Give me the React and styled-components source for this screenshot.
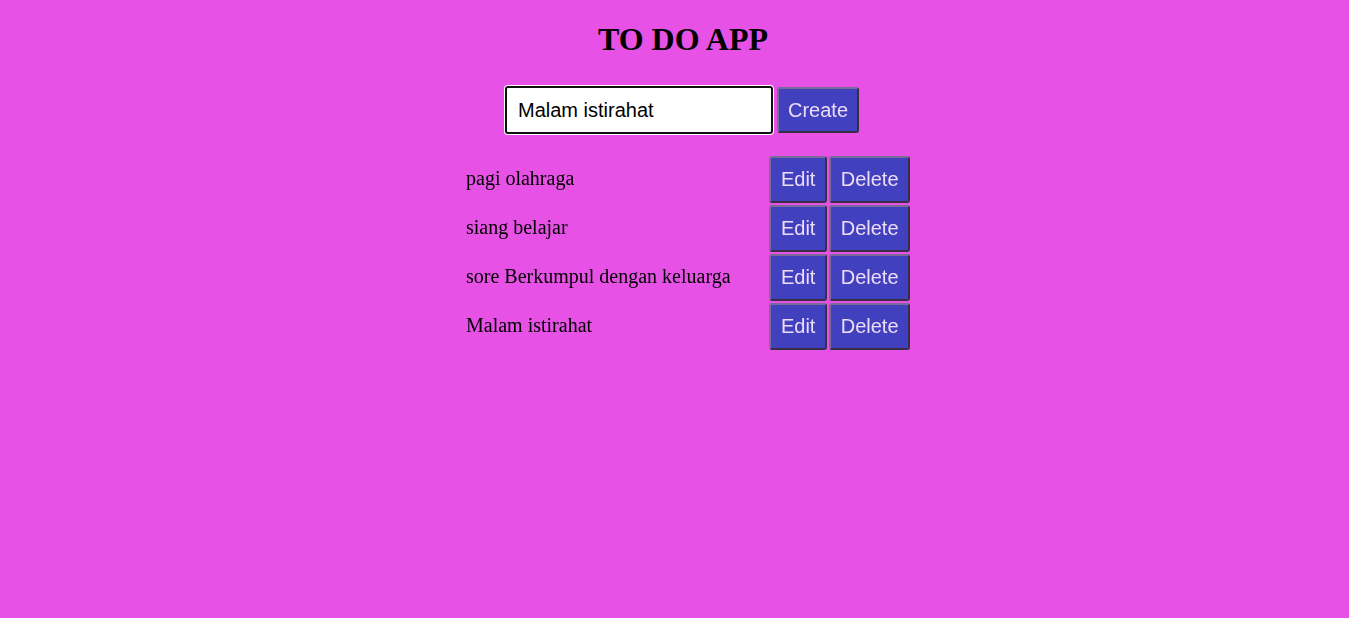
import { useState } from "react"
import styled, { createGlobalStyle } from "styled-components"

const GlobalStyle = createGlobalStyle`
    html, body {
        margin: 0;
        background-color: #e751e6;
    }
    body {
        font-family: "Liberation Serif", "Times New Roman", serif;
    }
`

const Container = styled.div`
    min-height: 618px;
    padding: 21px 0 0 17px;
    display: flex;
    flex-direction: column;
    align-items: center;
    box-sizing: border-box;
`
const Title = styled.h1`
    margin: 0;
    font-size: 32px;
    line-height: 37px;
    font-weight: bold;
    color: #000;
`
const Form = styled.form`
    display: flex;
    align-items: center;
    gap: 4px;
    margin-top: 28px;
`
const Input = styled.input`
    width: 268px;
    height: 48px;
    box-sizing: border-box;
    padding: 0 11px;
    margin-left: -2px;
    border: 2px solid #101010;
    border-radius: 3px;
    box-shadow: 0 0 0 1px #ffffff;
    outline: none;
    background: #fff;
    font-family: "Liberation Sans", Arial, sans-serif;
    font-size: 20px;
    color: #000;
`
const Button = styled.button`
    height: ${props => props.tall ? "47px" : "46px"};
    min-width: ${props => props.w || "auto"};
    padding: 0 ${props => props.tall ? "9.5px" : "9px"};
    border: 2px outset #7a6a98;
    border-radius: 3px;
    background-color: #4141c0;
    color: #ecdcf7;
    font-family: "Liberation Sans", Arial, sans-serif;
    font-size: 20px;
    cursor: pointer;
`
const List = styled.div`
    display: flex;
    flex-direction: column;
    gap: 2px;
    width: 444px;
    padding-left: 10px;
    margin-top: 22px;
`
const Row = styled.div`
    display: flex;
    align-items: center;
    justify-content: space-between;
`
const Text = styled.span`
    font-size: 20px;
    color: #000;
    margin-top: -2px;
`
const Actions = styled.div`
    display: flex;
    gap: 2px;
`

const App = () => {
    const [value, setValue] = useState("Malam istirahat")
    const [todos, setTodos] = useState([
        "pagi olahraga",
        "siang belajar",
        "sore Berkumpul dengan keluarga",
        "Malam istirahat",
    ])

    const handleSubmit = (e) => {
        e.preventDefault()
        if (value.trim()) setTodos([...todos, value])
    }

    return (
        <Container>
            <GlobalStyle />
            <Title>TO DO APP</Title>
            <Form onSubmit={handleSubmit}>
                <Input value={value} onChange={(e) => setValue(e.target.value)} autoFocus />
                <Button type="submit">Create</Button>
            </Form>
            <List>
                {todos.map((todo, i) => (
                    <Row key={i}>
                        <Text>{todo}</Text>
                        <Actions>
                            <Button tall w="58px">Edit</Button>
                            <Button tall w="80px" onClick={() => setTodos(todos.filter((_, j) => j !== i))}>Delete</Button>
                        </Actions>
                    </Row>
                ))}
            </List>
        </Container>
    )
}

export default App
